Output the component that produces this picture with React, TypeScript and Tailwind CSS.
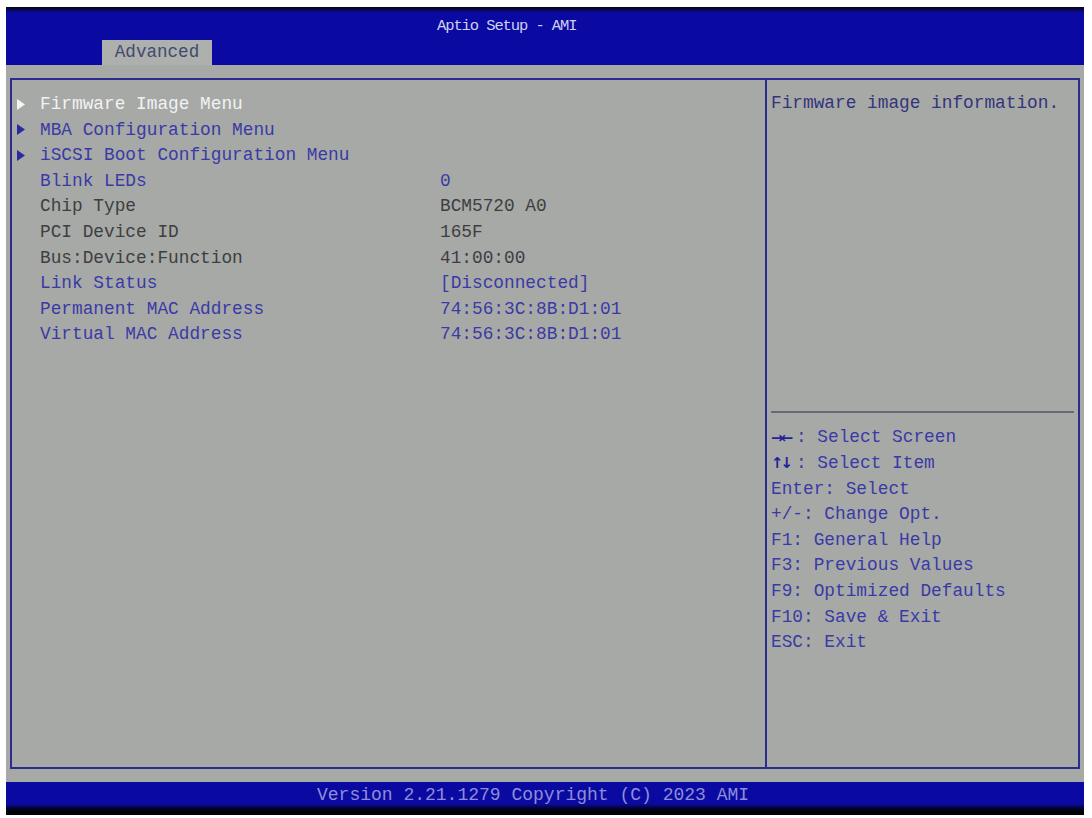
import React from 'react';

const mono = { fontFamily: '"Liberation Mono", "DejaVu Sans Mono", monospace' };

type Row = {
  label: string;
  value?: string;
  menu?: boolean;
  selected?: boolean;
  tone: 'blue' | 'dark' | 'white';
};

const rows: Row[] = [
  { label: 'Firmware Image Menu', menu: true, selected: true, tone: 'white' },
  { label: 'MBA Configuration Menu', menu: true, tone: 'blue' },
  { label: 'iSCSI Boot Configuration Menu', menu: true, tone: 'blue' },
  { label: 'Blink LEDs', value: '0', tone: 'blue' },
  { label: 'Chip Type', value: 'BCM5720 A0', tone: 'dark' },
  { label: 'PCI Device ID', value: '165F', tone: 'dark' },
  { label: 'Bus:Device:Function', value: '41:00:00', tone: 'dark' },
  { label: 'Link Status', value: '[Disconnected]', tone: 'blue' },
  { label: 'Permanent MAC Address', value: '74:56:3C:8B:D1:01', tone: 'blue' },
  { label: 'Virtual MAC Address', value: '74:56:3C:8B:D1:01', tone: 'blue' },
];

const help = [
  ['→←', ': Select Screen'],
  ['↑↓', ': Select Item'],
  ['Enter', ': Select'],
  ['+/-', ': Change Opt.'],
  ['F1', ': General Help'],
  ['F3', ': Previous Values'],
  ['F9', ': Optimized Defaults'],
  ['F10', ': Save & Exit'],
  ['ESC', ': Exit'],
];

function toneClass(tone: Row['tone']) {
  if (tone === 'white') return 'text-[#f2f2f4]';
  if (tone === 'dark') return 'text-[#3e3e42]';
  return 'text-[#3a3aa6]';
}

function Arrow({ white }: { white?: boolean }) {
  return (
    <svg width="8" height="11" viewBox="0 0 8 11">
      <polygon points="0,0 8,5.5 0,11" fill={white ? '#f4f4f6' : '#2a2aa0'} />
    </svg>
  );
}

export default function App() {
  return (
    <div className="w-[1092px] h-[818px] bg-white pt-[7px] pl-[6px]" style={mono}>
      <div className="w-[1078px] h-[808px] bg-[#a7a9a7] flex flex-col">
        {/* header */}
        <div className="h-[58px] bg-[linear-gradient(#05050f_0px,#0a0aa2_6px,#0a0aa2_100%)] flex flex-col">
          <div className="h-[33px] pt-[10px] pl-[431px] text-[15.5px] tracking-[-1.1px] leading-[18px] text-[#cfd0f0] whitespace-pre">
            Aptio Setup - AMI
          </div>
          <div className="pl-[96px] flex">
            <div className="w-[110px] h-[25px] bg-[#aeb0ae] text-[17.6px] text-[#424a6c] flex items-center justify-center">
              Advanced
            </div>
          </div>
        </div>

        {/* body */}
        <div className="pt-[13px] pl-[4px] pr-[4px]">
          <div className="h-[691px] border-2 border-[#2c2c8c] flex">
            <div className="w-[755px] border-r-2 border-[#2c2c8c] pt-[11px] text-[17.8px]">
              {rows.map((r) => (
                <div key={r.label} className={`grid grid-cols-[28px_400px_1fr] h-[25.6px] items-center ${toneClass(r.tone)}`}>
                  <div className="pl-[5px] flex items-center">{r.menu && <Arrow white={r.selected} />}</div>
                  <div className="whitespace-pre">{r.label}</div>
                  <div className="whitespace-pre">{r.value}</div>
                </div>
              ))}
            </div>
            <div className="flex-1 flex flex-col text-[17.8px]">
              <div className="h-[331px] pt-[11px] pl-[4px]">
                <div className="h-[25.6px] flex items-center text-[#34347a]">Firmware image information.</div>
              </div>
              <div className="mx-[4px] h-[2px] bg-[#666a78]"></div>
              <div className="pt-[12px] pl-[4px]">
                {help.map(([k, t]) => (
                  <div key={k} className="h-[25.6px] flex items-center whitespace-pre text-[#3a3aa6]">
                    {k.startsWith('→') || k.startsWith('↑') ? (
                      <span className="w-[25px] flex justify-start text-[#22229a] text-[15px] font-bold tracking-[-3px] font-['DejaVu_Sans',sans-serif]">
                        {k}
                      </span>
                    ) : (
                      <span>{k}</span>
                    )}
                    <span>{t}</span>
                  </div>
                ))}
              </div>
            </div>
          </div>
        </div>

        <div className="h-[13px]"></div>

        {/* footer */}
        <div className="h-[33px] bg-[linear-gradient(#0a0aa2_0px,#0a0aa2_22px,#02021a_27px,#000_100%)]">
          <div className="pt-[3px] pl-[311px] text-[18px] leading-[20px] text-[#8e8ed8] whitespace-pre">
            Version 2.21.1279 Copyright (C) 2023 AMI
          </div>
        </div>
      </div>
    </div>
  );
}
